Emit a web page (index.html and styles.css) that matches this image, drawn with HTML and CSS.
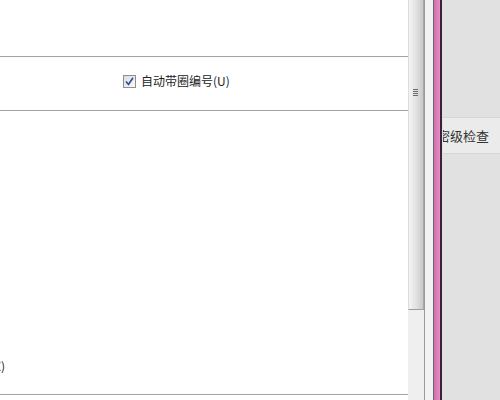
FILE: index.html
```html
<!DOCTYPE html>
<html lang="zh-CN">
<head>
  <meta charset="UTF-8">
  <title>编号设置</title>
  <link rel="stylesheet" href="styles.css">
</head>
<body>
  <div class="main">
    <div class="top"></div>
    <div class="option-row">
      <label class="check">
        <span class="box">
          <svg width="9" height="9" viewBox="0 0 9 9"><path d="M1 4.5 L3.5 7.5 L8 0.8" fill="none" stroke="#2b4c9c" stroke-width="1.6"/></svg>
        </span>
        自动带圈编号(U)
      </label>
    </div>
    <div class="content">
      <div class="cut-label">样式(X)</div>
    </div>
    <div class="bottom"></div>
  </div>

  <div class="scrollbar">
    <div class="thumb">
      <div class="grip"><i></i><i></i><i></i><i></i></div>
    </div>
  </div>

  <div class="splitter">
    <div class="strip"></div>
    <div class="pink"></div>
  </div>

  <div class="side">
    <div class="side-item"><span>密级检查</span></div>
  </div>
</body>
</html>
```

FILE: styles.css
```css
html, body {
  margin: 0;
  padding: 0;
}
body {
  width: 500px;
  height: 400px;
  overflow: hidden;
  display: flex;
  font-family: "Noto Sans CJK SC", "Liberation Sans", sans-serif;
  font-size: 12px;
  color: #222;
  background-color: #e1e1e1;
}
.main {
  width: 408px;
  background-color: white;
  display: flex;
  flex-direction: column;
}
.top {
  height: 56px;
  border-bottom: 1px solid #a3a3a3;
  box-shadow: 0 1px 0 #fafafa;
}
.option-row {
  height: 53px;
  border-bottom: 1px solid #a3a3a3;
  display: flex;
  align-items: center;
  padding-left: 123px;
}
.check {
  display: flex;
  align-items: center;
  gap: 5px;
  line-height: 14px;
  margin-top: -5px;
}
.box {
  width: 11px;
  height: 11px;
  border: 1px solid #8e8f8f;
  background: linear-gradient(135deg, #dcdcdc, #fafafa);
  display: flex;
  align-items: center;
  justify-content: center;
}
.content {
  flex: 1;
  display: flex;
  flex-direction: column;
  justify-content: flex-end;
  padding-bottom: 21px;
}
.cut-label {
  margin-left: -34px;
  line-height: 14px;
}
.bottom {
  height: 5px;
  border-top: 1px solid #a3a3a3;
}
.scrollbar {
  width: 16px;
  background-color: #efefef;
  border-right: 1px solid #9a9a9a;
}
.thumb {
  height: 310px;
  border-right: 1px solid #a7a7a7;
  border-bottom: 1px solid #9c9c9c;
  border-left: 1px solid #dcdcdc;
  background: linear-gradient(to right, #f4f4f4, #e2e2e2 50%, #c9c9c9);
  padding-top: 89px;
  box-sizing: border-box;
}
.grip {
  width: 5px;
  margin-left: 4px;
  display: flex;
  flex-direction: column;
  gap: 1px;
}
.grip i {
  height: 1px;
  background-color: #6a6a6a;
}
.splitter {
  width: 18px;
  display: flex;
}
.strip {
  width: 8px;
  background-color: #f2f2f2;
  border-right: 1px solid #6d6470;
}
.pink {
  width: 6px;
  background: linear-gradient(to right, #d16fae, #e48dc6);
  border-right: 2px solid #3b2234;
}
.side {
  flex: 1;
  padding-top: 117px;
  overflow: hidden;
}
.side-item {
  height: 35px;
  background-color: #ebebeb;
  border-top: 1px solid #d6d6d6;
  border-bottom: 1px solid #d6d6d6;
  display: flex;
  align-items: center;
  font-size: 13px;
  color: #333;
}
.side-item span {
  margin-left: -6px;
  white-space: nowrap;
}
```
